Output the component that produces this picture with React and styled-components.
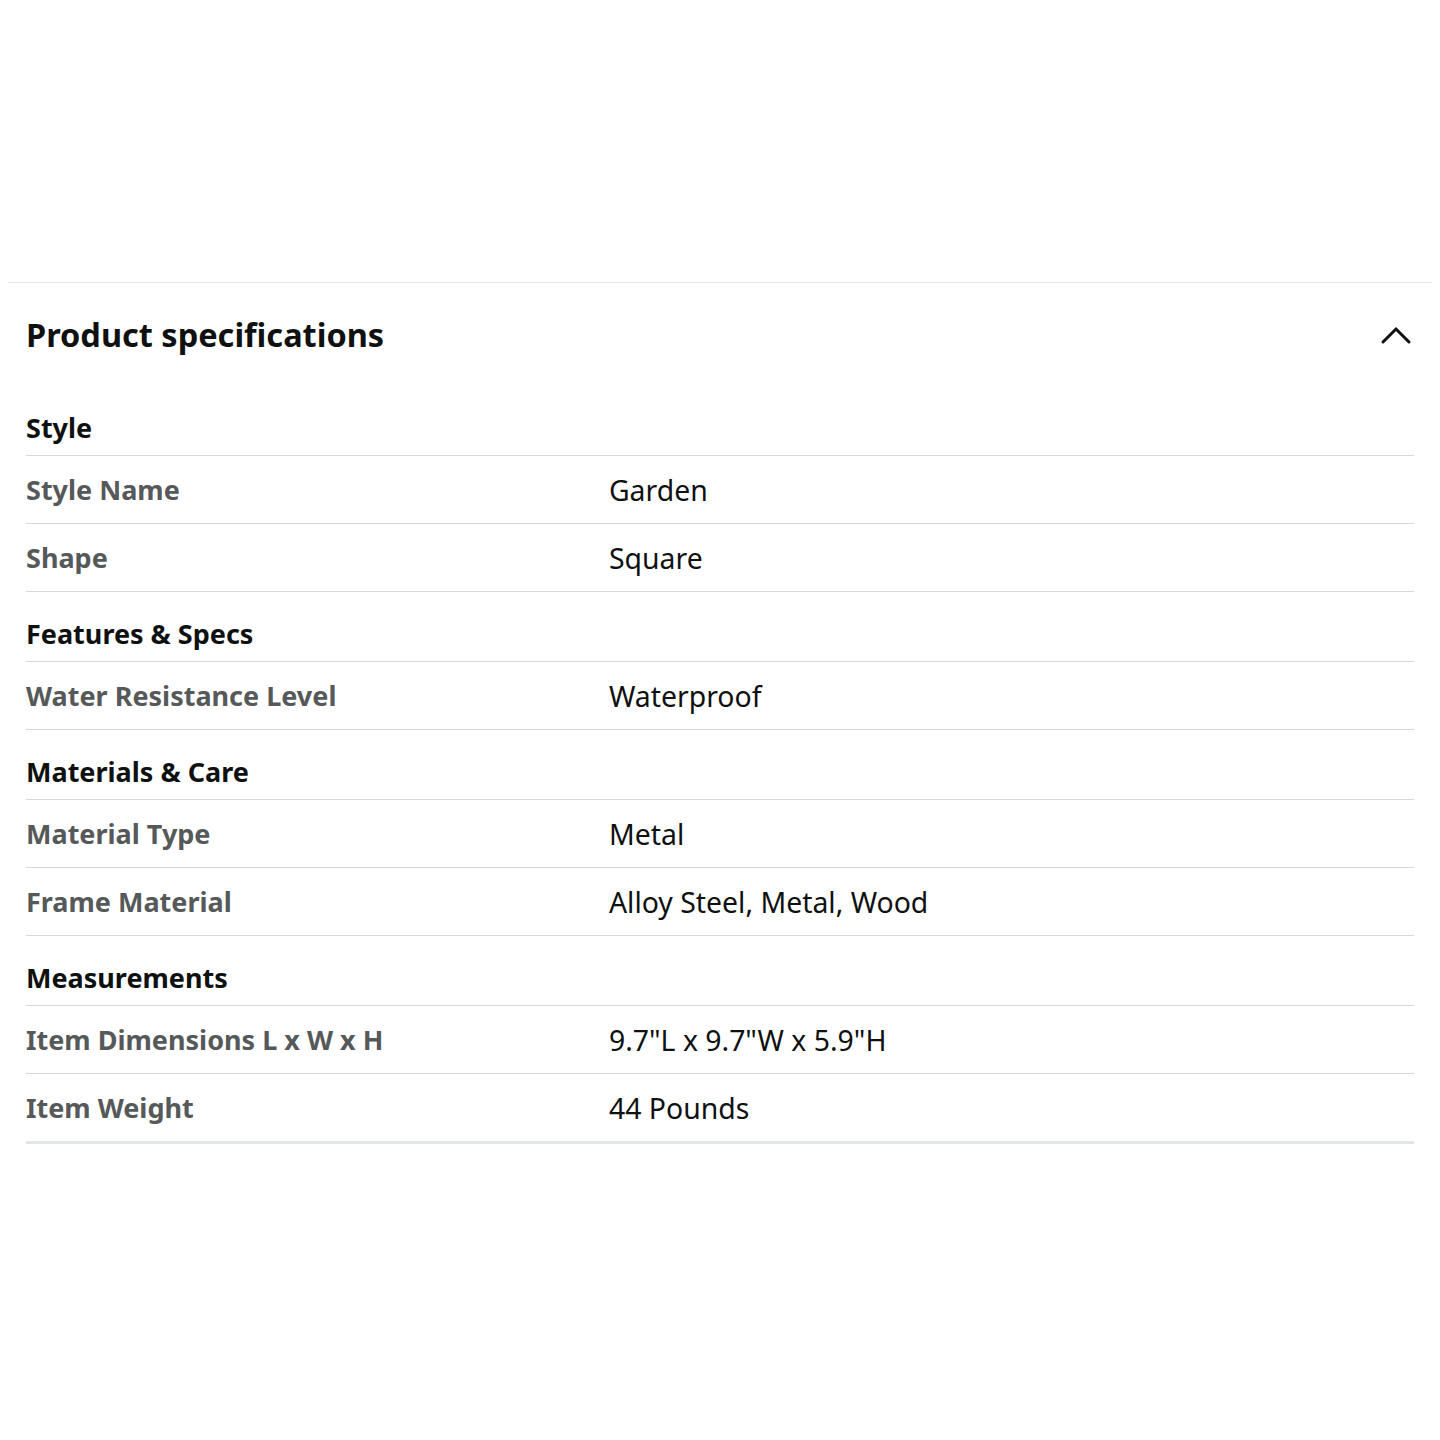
import React from "react";
import styled, { createGlobalStyle } from "styled-components";

const GlobalStyle = createGlobalStyle`
  body {
    margin: 8px;
    background: #fff;
    font-family: "Noto Sans", "Open Sans", sans-serif;
    color: #0f1111;
  }
`;

const TopSpace = styled.div`
  height: 274px;
`;

const Section = styled.section`
  border-top: 1px solid #e3e6e6;
  padding: 0 18px;
`;

const Header = styled.div`
  display: flex;
  align-items: center;
  justify-content: space-between;
  height: 103px;
`;

const Title = styled.h2`
  margin: 0;
  font-size: 32.5px;
  font-weight: 700;
  color: #0f1111;
`;

const Toggle = styled.button`
  border: none;
  background: none;
  padding: 0;
  margin-right: 2px;
  display: flex;
  cursor: pointer;
`;

const Table = styled.div`
  border-bottom: 3px solid #e3e6e6;
`;

const GroupTitle = styled.div`
  padding: 27px 0 12px;
  line-height: 30px;
  font-size: 27px;
  font-weight: 700;
  color: #0f1111;
  border-bottom: 1px solid #d5d9d9;
`;

const Row = styled.div`
  display: grid;
  grid-template-columns: 42% 1fr;
  align-items: center;
  height: 67px;
  border-bottom: 1px solid #d5d9d9;

  &:last-child {
    border-bottom: none;
  }
`;

const Label = styled.span`
  font-size: 27px;
  font-weight: 700;
  color: #565959;
`;

const Value = styled.span`
  font-size: 28.4px;
  color: #0f1111;
`;

const specs = [
  {
    group: "Style",
    rows: [
      ["Style Name", "Garden"],
      ["Shape", "Square"],
    ],
  },
  {
    group: "Features & Specs",
    rows: [["Water Resistance Level", "Waterproof"]],
  },
  {
    group: "Materials & Care",
    rows: [
      ["Material Type", "Metal"],
      ["Frame Material", "Alloy Steel, Metal, Wood"],
    ],
  },
  {
    group: "Measurements",
    rows: [
      ["Item Dimensions L x W x H", '9.7"L x 9.7"W x 5.9"H'],
      ["Item Weight", "44 Pounds"],
    ],
  },
];

const ChevronUp = () => (
  <svg width="32" height="20" viewBox="0 0 32 20" fill="none">
    <path d="M3 17 L16 4 L29 17" stroke="#0f1111" strokeWidth="3" strokeLinecap="round" strokeLinejoin="miter" />
  </svg>
);

const App = () => (
  <>
    <GlobalStyle />
    <TopSpace />
    <Section>
      <Header>
        <Title>Product specifications</Title>
        <Toggle aria-label="Collapse">
          <ChevronUp />
        </Toggle>
      </Header>
      <Table>
        {specs.map((s) => (
          <React.Fragment key={s.group}>
            <GroupTitle>{s.group}</GroupTitle>
            {s.rows.map(([k, v]) => (
              <Row key={k}>
                <Label>{k}</Label>
                <Value>{v}</Value>
              </Row>
            ))}
          </React.Fragment>
        ))}
      </Table>
    </Section>
  </>
);

export default App;
